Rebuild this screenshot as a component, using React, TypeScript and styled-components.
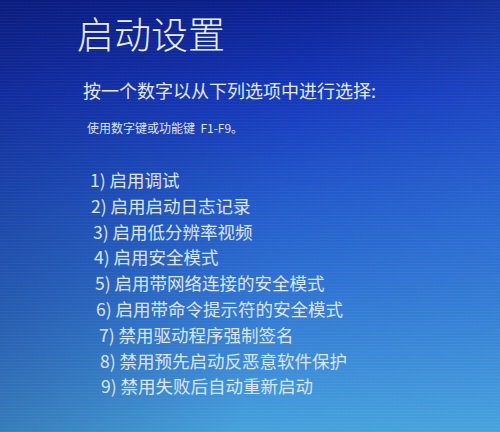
import React from 'react'
import styled, { createGlobalStyle } from 'styled-components'

const options = [
  { key: '1', label: '启用调试', indent: 90 },
  { key: '2', label: '启用启动日志记录', indent: 91 },
  { key: '3', label: '启用低分辨率视频', indent: 93 },
  { key: '4', label: '启用安全模式', indent: 94 },
  { key: '5', label: '启用带网络连接的安全模式', indent: 95 },
  { key: '6', label: '启用带命令提示符的安全模式', indent: 96 },
  { key: '7', label: '禁用驱动程序强制签名', indent: 99 },
  { key: '8', label: '禁用预先启动反恶意软件保护', indent: 100 },
  { key: '9', label: '禁用失败后自动重新启动', indent: 101 },
]

export default function App() {
  return (
    <>
      <GlobalStyle />
      <Screen>
        <Title>启动设置</Title>
        <Prompt>按一个数字以从下列选项中进行选择:</Prompt>
        <Hint>使用数字键或功能键&nbsp; F1-F9。</Hint>
        <OptionList>
          {options.map((o) => (
            <Option key={o.key} $indent={o.indent}>
              {o.key}) {o.label}
            </Option>
          ))}
        </OptionList>
      </Screen>
    </>
  )
}

const GlobalStyle = createGlobalStyle`
  html, body {
    margin: 0;
    padding: 0;
    background: #0c2290;
  }
  body {
    font-family: "Noto Sans CJK SC", "Noto Sans", sans-serif;
  }
`

const Screen = styled.div`
  position: relative;
  width: 500px;
  height: 432px;
  overflow: hidden;
  box-sizing: border-box;
  padding-top: 11px;
  display: flex;
  flex-direction: column;
  color: #e6edf8;
  background:
    repeating-linear-gradient(
      0deg,
      rgba(255, 255, 255, 0.035) 0px,
      rgba(255, 255, 255, 0.035) 1px,
      transparent 1px,
      transparent 3px
    ),
    linear-gradient(100deg, rgba(10, 20, 90, 0.35) 0%, rgba(10, 20, 90, 0) 55%, rgba(80, 170, 230, 0.15) 100%),
    linear-gradient(180deg, #0b2090 0%, #1538bd 22%, #2259cb 45%, #2f74d2 68%, #3e90d8 88%, #46a2dc 100%);
`

const Title = styled.h1`
  margin: 0 0 0 77px;
  font-size: 37px;
  font-weight: 300;
  line-height: 44px;
  letter-spacing: 0;
  color: #eef2fa;
`

const Prompt = styled.div`
  margin: 23px 0 0 83px;
  font-size: 18px;
  line-height: 24px;
  color: #e4ebf7;
`

const Hint = styled.div`
  margin: 18px 0 0 87px;
  font-size: 12px;
  line-height: 16px;
  color: #dfe7f4;
`

const OptionList = styled.div`
  margin-top: 31px;
  display: flex;
  flex-direction: column;
`

const Option = styled.div<{ $indent: number }>`
  margin-left: ${(p) => p.$indent}px;
  font-size: 17.5px;
  line-height: 25.8px;
  color: #dde6f3;
  white-space: nowrap;
`
